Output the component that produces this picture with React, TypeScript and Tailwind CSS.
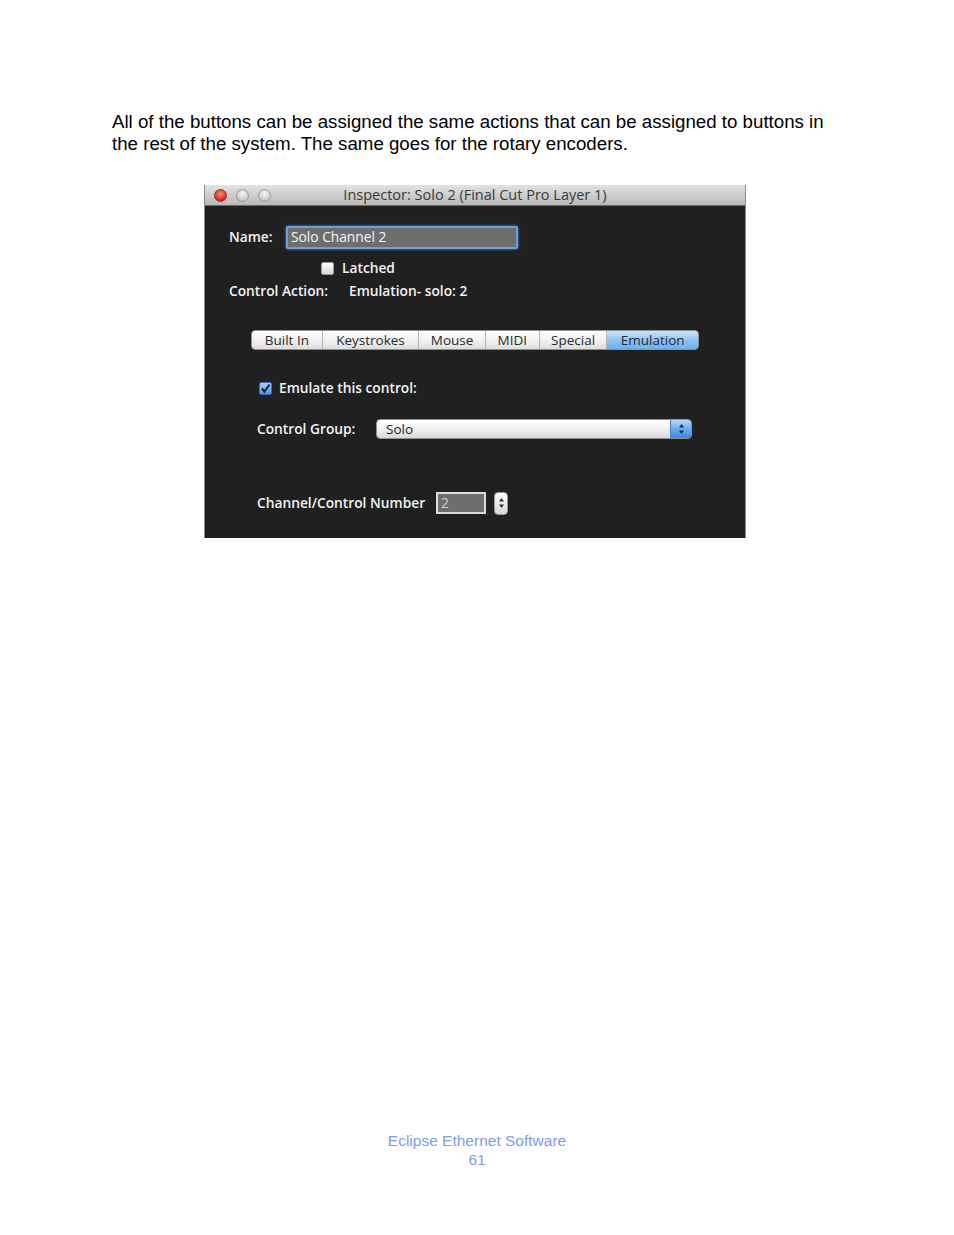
import React from "react";

const ui = { fontFamily: '"Open Sans", "DejaVu Sans", sans-serif' };

function TrafficLights() {
  return (
    <div className="flex items-center gap-[9px] pl-[9px]">
      <span className="h-[13px] w-[13px] rounded-full border border-[#9c2a22] bg-[radial-gradient(circle_at_50%_35%,#ff8a7a,#d8392b_60%,#a3241a)]" />
      <span className="h-[13px] w-[13px] rounded-full border border-[#9a9a9a] bg-[radial-gradient(circle_at_50%_35%,#f4f4f4,#cfcfcf_60%,#b3b3b3)]" />
      <span className="h-[13px] w-[13px] rounded-full border border-[#9a9a9a] bg-[radial-gradient(circle_at_50%_35%,#f4f4f4,#cfcfcf_60%,#b3b3b3)]" />
    </div>
  );
}

function Checkbox({ checked }: { checked?: boolean }) {
  if (checked) {
    return (
      <span className="flex h-[13px] w-[13px] items-center justify-center rounded-[2px] border border-[#3a6fb7] bg-gradient-to-b from-[#a8d0f8] to-[#4f92e0]">
        <svg width="11" height="11" viewBox="0 0 11 11">
          <path d="M2 5.5 L4.5 8.5 L9.5 1.5" fill="none" stroke="#10233f" strokeWidth="2" />
        </svg>
      </span>
    );
  }
  return <span className="h-[13px] w-[13px] rounded-[2px] border border-[#9a9a9a] bg-gradient-to-b from-white to-[#d6d6d6]" />;
}

const tabs = [
  { label: "Built In", w: 70 },
  { label: "Keystrokes", w: 97 },
  { label: "Mouse", w: 67 },
  { label: "MIDI", w: 54 },
  { label: "Special", w: 68 },
  { label: "Emulation", w: 92, active: true },
];

function Arrows({ color }: { color: string }) {
  return (
    <svg width="7" height="12" viewBox="0 0 7 12">
      <path d="M3.5 1 L6 4.5 L1 4.5 Z" fill={color} />
      <path d="M3.5 11 L6 7.5 L1 7.5 Z" fill={color} />
    </svg>
  );
}

function Inspector() {
  return (
    <div className="ml-[204px] mt-[30px] w-[542px] border-x border-[#8a8a8a] bg-[#202020]" style={ui}>
      {/* titlebar */}
      <div className="relative flex h-[21px] items-center border-b border-[#6a6a6a] bg-gradient-to-b from-[#e2e2e2] to-[#b9b9b9]">
        <TrafficLights />
        <div className="absolute inset-0 flex items-center justify-center text-[14.5px] text-[#3a3a3a]">
          Inspector: Solo 2 (Final Cut Pro Layer 1)
        </div>
      </div>

      <div className="pb-[23px] pt-[20px] text-[13.75px] font-semibold text-[#f2f2f2]">
        {/* name */}
        <div className="flex h-[23px] items-center pl-[24px]">
          <span className="w-[57px]">Name:</span>
          <div className="flex h-[23px] w-[232px] items-center rounded-[2px] border-2 border-[#6d9fe0] bg-[#6e6e6e] px-[3px] font-normal text-[#f5f5f5] shadow-[0_0_3px_#5b8fd8]">
            Solo Channel 2
          </div>
        </div>

        {/* latched */}
        <div className="mt-[9px] flex items-center gap-[8px] pl-[116px]">
          <Checkbox />
          <span>Latched</span>
        </div>

        {/* control action */}
        <div className="mt-[2px] flex items-center pl-[24px]">
          <span className="w-[120px]">Control Action:</span>
          <span>Emulation- solo: 2</span>
        </div>

        {/* tabs */}
        <div className="ml-[46px] mt-[29px] flex h-[20px] w-[448px] overflow-hidden rounded-[4px] border border-[#8f8f8f] text-[13.5px] font-normal text-[#2a2a2a]">
          {tabs.map((t, i) => (
            <div
              key={t.label}
              className={
                "flex items-center justify-center " +
                (i > 0 ? "border-l border-[#b5b5b5] " : "") +
                (t.active
                  ? "bg-gradient-to-b from-[#cfe6fb] via-[#8fc3f3] to-[#6cb0ef] text-[#1d2a3a]"
                  : "bg-gradient-to-b from-white via-[#f2f2f2] to-[#dcdcdc]")
              }
              style={{ width: t.w }}
            >
              {t.label}
            </div>
          ))}
        </div>

        {/* emulate */}
        <div className="mt-[28px] flex items-center gap-[7px] pl-[54px]">
          <Checkbox checked />
          <span>Emulate this control:</span>
        </div>

        {/* control group */}
        <div className="mt-[20px] flex items-center pl-[52px]">
          <span className="w-[119px]">Control Group:</span>
          <div className="flex h-[20px] w-[316px] overflow-hidden rounded-[4px] border border-[#8f8f8f] text-[13.5px] font-normal text-[#222]">
            <div className="flex flex-1 items-center bg-gradient-to-b from-white via-[#f1f1f1] to-[#d9d9d9] pl-[9px]">Solo</div>
            <div className="flex w-[21px] items-center justify-center border-l border-[#4c86cf] bg-gradient-to-b from-[#b6d9fa] via-[#6aaaf0] to-[#3f87e0]">
              <Arrows color="#1b2b44" />
            </div>
          </div>
        </div>

        {/* channel */}
        <div className="mt-[52px] flex items-center pl-[52px]">
          <span className="w-[179px]">Channel/Control Number</span>
          <div className="flex h-[22px] w-[50px] items-center border-2 border-[#dcdcdc] bg-[#6e6e6e] px-[3px] font-normal text-[#cfcfcf]">2</div>
          <div className="ml-[8px] flex h-[23px] w-[14px] items-center justify-center rounded-[4px] border border-[#9a9a9a] bg-gradient-to-b from-white to-[#d8d8d8]">
            <Arrows color="#333" />
          </div>
        </div>
      </div>
    </div>
  );
}

export default function App() {
  return (
    <div className="h-[1235px] w-[954px] bg-white" style={{ fontFamily: '"Liberation Sans", Arial, sans-serif' }}>
      <div className="pl-[112px] pt-[111px]">
        <p className="w-[718px] text-[18.7px] leading-[22px] text-black">
          All of the buttons can be assigned the same actions that can be assigned to buttons in the rest of the system. The same goes for the rotary encoders.
        </p>
      </div>
      <Inspector />
      <div className="mt-[593px] text-center text-[15.5px] leading-[19px] text-[#7b9cf0]">
        <div>Eclipse Ethernet Software</div>
        <div>61</div>
      </div>
    </div>
  );
}
